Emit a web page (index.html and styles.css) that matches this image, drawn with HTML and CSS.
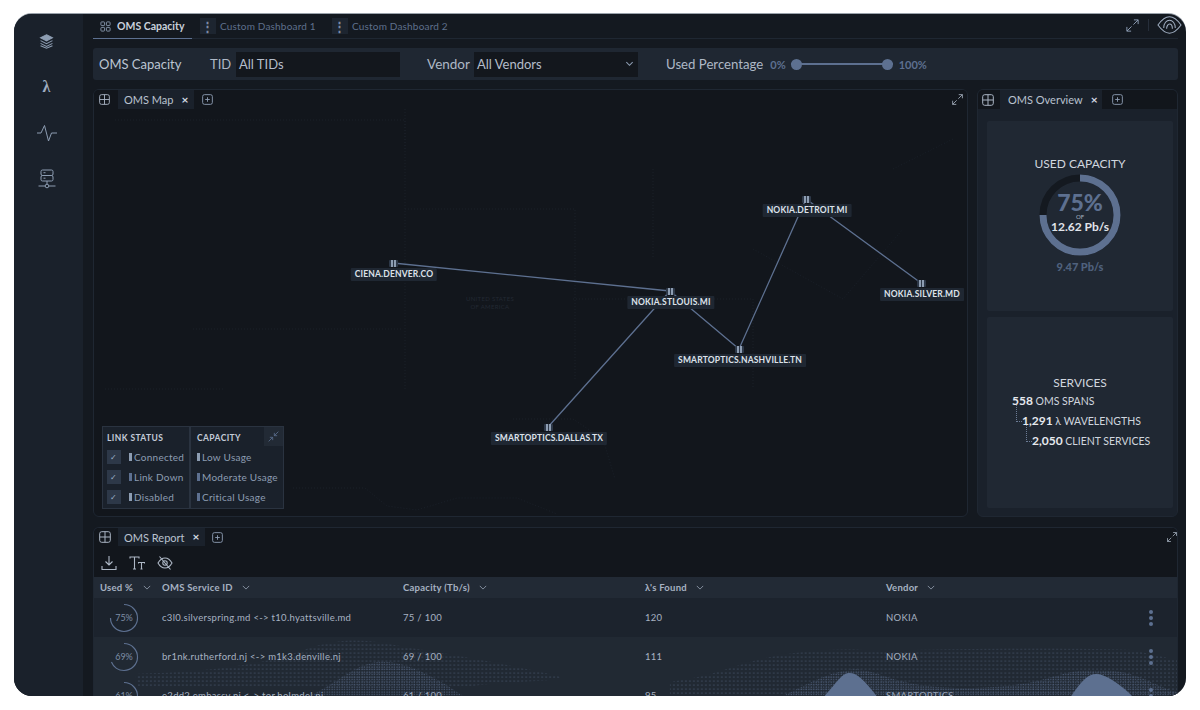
FILE: index.html
```html
<!DOCTYPE html>
<html lang="en">
<head>
<meta charset="utf-8">
<title>OMS Capacity</title>
<link rel="stylesheet" href="styles.css">
</head>
<body>
<div class="window">
  <aside class="sidebar">
    <div class="nav-item"><svg class="nav-icon" viewBox="0 0 20 20"><path class="fill-i" d="M10 2l7 3.600-7 3.600-7-3.600z"/><path d="M3 9l7 3.600L17 9M3 12.200l7 3.600 7-3.600M3 15l7 3 7-3"/></svg></div>
    <div class="nav-item lambda">λ</div>
    <div class="nav-item"><svg class="nav-icon wide" viewBox="0 0 20 20"><path d="M0 10h4L7.500 2.500 11.500 18l3-8H20"/></svg></div>
    <div class="nav-item"><svg class="nav-icon wide" viewBox="0 0 20 20"><rect x="4" y="1" width="12" height="5.500" rx="1.500"/><rect x="4" y="6.500" width="12" height="5.500" rx="1.500"/><path d="M10 12v3M1.500 17h6.500M12 17h6.500M6.500 3.700h2M6.500 9.200h2"/><circle cx="10" cy="17" r="1.800"/></svg></div>
  </aside>
  <main class="content">
    <nav class="top-tabs">
      <div class="top-tab active">
        <svg class="tab-grid" viewBox="0 0 12 12"><rect x="1" y="1" width="4" height="4" rx=".8"/><rect x="7" y="1" width="4" height="4" rx=".8"/><rect x="1" y="7" width="4" height="4" rx=".8"/><rect x="7" y="7" width="4" height="4" rx=".8"/></svg>
        <span>OMS Capacity</span>
      </div>
      <div class="top-tab"><span class="kebab">⋮</span><span>Custom Dashboard 1</span></div>
      <div class="top-tab"><span class="kebab">⋮</span><span>Custom Dashboard 2</span></div>
      <div class="top-actions">
        <svg class="expand" viewBox="0 0 16 16"><path d="M2 14l5-5M9 7l5-5M9.500 2H14v4.500M2 9.500V14h4.500"/></svg>
        <span class="action-sep"></span>
        <svg class="logo" viewBox="0 0 26 20"><path d="M1 10C5 4.500 9 1.500 13 1.500S21 4.500 25 10c-4 5.500-8 8.500-12 8.500S5 15.500 1 10z"/><path d="M7 13c0-5 3-8 6-8s6 3 6 8M10 14c0-3 1.500-5 3-5s3 2 3 5"/></svg>
      </div>
    </nav>

    <section class="filters">
      <span class="filter-title">OMS Capacity</span>
      <span class="filter-label tid-label">TID</span>
      <div class="field tid-field">All TIDs</div>
      <span class="filter-label vendor-label">Vendor</span>
      <div class="field vendor-field"><span>All Vendors</span><svg class="chev" viewBox="0 0 10 6"><path d="M1.500 1L5 4.500 8.500 1"/></svg></div>
      <span class="filter-label used-label">Used Percentage</span>
      <span class="pct">0%</span>
      <div class="slider"><span class="knob"></span><span class="knob"></span></div>
      <span class="pct">100%</span>
    </section>

    <div class="panels">
      <section class="panel map-panel">
        <header class="panel-tabs">
          <svg class="grid-ic" viewBox="0 0 12 12"><rect x=".7" y=".7" width="10.600" height="10.600" rx="2"/><path d="M6 .7v10.600M.7 6h10.600"/></svg>
          <div class="panel-tab"><span>OMS Map</span><span class="close">×</span></div>
          <svg class="add-ic" viewBox="0 0 12 12"><rect x=".7" y=".7" width="10.600" height="10.600" rx="2"/><path d="M6 3.500v5M3.500 6h5"/></svg>
          <svg class="expand panel-expand" viewBox="0 0 16 16"><path d="M2 14l5-5M9 7l5-5M9.500 2H14v4.500M2 9.500V14h4.500"/></svg>
        </header>
        <div class="map">
          <svg class="map-art" viewBox="0 0 875 407">
            <g class="borders">
              <path d="M22 11h290v270M312 100h170v170M312 40V0M480 190h180v90M100 220h210M560 60v90M660 140l90 50 60-70"/>
              <path d="M200 379h72l22 18 30 4 40-12h60l40 16M420 310h60l30 20 12 40M800 60l60-30M12 280h120"/>
            </g>
            <g class="links">
              <path d="M300 154L577 182M577 182L646 240M646 240L713 90M713 90L828 174M577 182L455 318"/>
            </g>
          </svg>
          <div class="map-text">UNITED STATES<br>OF AMERICA</div>

          <div class="node" style="left:300px;top:154px"><i></i><b>CIENA.DENVER.CO</b></div>
          <div class="node" style="left:577px;top:182px"><i></i><b>NOKIA.STLOUIS.MI</b></div>
          <div class="node" style="left:713px;top:90px"><i></i><b>NOKIA.DETROIT.MI</b></div>
          <div class="node" style="left:828px;top:174px"><i></i><b>NOKIA.SILVER.MD</b></div>
          <div class="node" style="left:646px;top:240px"><i></i><b>SMARTOPTICS.NASHVILLE.TN</b></div>
          <div class="node" style="left:455px;top:318px"><i></i><b>SMARTOPTICS.DALLAS.TX</b></div>

          <div class="legend">
            <div class="legend-col status">
              <h4>LINK STATUS</h4>
              <div class="legend-row"><span class="check">✓</span><span class="swatch bright"></span>Connected</div>
              <div class="legend-row"><span class="check">✓</span><span class="swatch mid"></span>Link Down</div>
              <div class="legend-row"><span class="check">✓</span><span class="swatch bright"></span>Disabled</div>
            </div>
            <div class="legend-col capacity">
              <h4>CAPACITY</h4>
              <div class="legend-row"><span class="swatch bright"></span>Low Usage</div>
              <div class="legend-row"><span class="swatch mid"></span>Moderate Usage</div>
              <div class="legend-row"><span class="swatch mid"></span>Critical Usage</div>
            </div>
            <span class="legend-collapse"><svg viewBox="0 0 16 16"><path d="M2 14l5-5M14 2L9 7M3.500 9H7v3.500M12.500 7H9V3.500"/></svg></span>
          </div>
        </div>
      </section>

      <section class="panel overview-panel">
        <header class="panel-tabs overview-tabs">
          <svg class="grid-ic" viewBox="0 0 12 12"><rect x=".7" y=".7" width="10.600" height="10.600" rx="2"/><path d="M6 .7v10.600M.7 6h10.600"/></svg>
          <div class="panel-tab"><span>OMS Overview</span><span class="close">×</span></div>
          <svg class="add-ic" viewBox="0 0 12 12"><rect x=".7" y=".7" width="10.600" height="10.600" rx="2"/><path d="M6 3.500v5M3.500 6h5"/></svg>
        </header>
        <div class="card capacity-card">
          <h3>USED CAPACITY</h3>
          <div class="donut">
            <svg viewBox="0 0 84 84">
              <circle class="ring-bg" cx="42" cy="42" r="37"/>
              <circle class="ring-val" cx="42" cy="42" r="37" pathLength="100" stroke-dasharray="75 25" transform="rotate(-90 42 42)"/>
            </svg>
            <div class="donut-text">
              <strong>75%</strong>
              <small>OF</small>
              <em>12.62 Pb/s</em>
            </div>
          </div>
          <div class="used-value">9.47 Pb/s</div>
        </div>
        <div class="card services-card">
          <h3>SERVICES</h3>
          <ul class="services">
            <li class="lvl0"><b>558</b> OMS SPANS</li>
            <li class="lvl1"><b>1,291</b> λ WAVELENGTHS</li>
            <li class="lvl2"><b>2,050</b> CLIENT SERVICES</li>
          </ul>
        </div>
      </section>
    </div>

    <section class="panel report-panel">
      <header class="panel-tabs">
        <svg class="grid-ic" viewBox="0 0 12 12"><rect x=".7" y=".7" width="10.600" height="10.600" rx="2"/><path d="M6 .7v10.600M.7 6h10.600"/></svg>
        <div class="panel-tab"><span>OMS Report</span><span class="close">×</span></div>
        <svg class="add-ic" viewBox="0 0 12 12"><rect x=".7" y=".7" width="10.600" height="10.600" rx="2"/><path d="M6 3.500v5M3.500 6h5"/></svg>
        <svg class="expand panel-expand" viewBox="0 0 16 16"><path d="M2 14l5-5M9 7l5-5M9.500 2H14v4.500M2 9.500V14h4.500"/></svg>
      </header>
      <div class="toolbar">
        <svg viewBox="0 0 16 16"><path d="M8 1v9M4.500 6.500L8 10l3.500-3.500M1 11v3.500h14V11"/></svg>
        <svg viewBox="0 0 16 16"><path d="M1 3.500V2h9v1.500M5.500 2v12M4 14h3M9.500 8.500V7.500h6v1M12.500 7.500V14M11.500 14h2"/></svg>
        <svg viewBox="0 0 16 16"><path d="M1 8c2-3.500 4.500-5 7-5s5 1.500 7 5c-2 3.500-4.500 5-7 5s-5-1.500-7-5zM2.500 1.500l11 13"/><circle cx="8" cy="8" r="2.200"/></svg>
      </div>
      <div class="table">
        <div class="row head">
          <span>Used % <svg class="sort" viewBox="0 0 10 6"><path d="M1 1l4 4 4-4"/></svg></span>
          <span>OMS Service ID <svg class="sort" viewBox="0 0 10 6"><path d="M1 1l4 4 4-4"/></svg></span>
          <span>Capacity (Tb/s) <svg class="sort" viewBox="0 0 10 6"><path d="M1 1l4 4 4-4"/></svg></span>
          <span>λ's Found <svg class="sort" viewBox="0 0 10 6"><path d="M1 1l4 4 4-4"/></svg></span>
          <span>Vendor <svg class="sort" viewBox="0 0 10 6"><path d="M1 1l4 4 4-4"/></svg></span>
          <span></span>
        </div>
        <div class="row odd">
          <span class="gauge"><svg viewBox="0 0 30 30"><circle cx="15" cy="15" r="13.500" pathLength="100" stroke-dasharray="75 25" transform="rotate(-90 15 15)"/></svg><i>75%</i></span>
          <span>c3l0.silverspring.md &lt;-&gt; t10.hyattsville.md</span><span>75 / 100</span><span>120</span><span>NOKIA</span><span class="dots"><i></i><i></i><i></i></span>
        </div>
        <div class="row even">
          <span class="gauge"><svg viewBox="0 0 30 30"><circle cx="15" cy="15" r="13.500" pathLength="100" stroke-dasharray="69 31" transform="rotate(-90 15 15)"/></svg><i>69%</i></span>
          <span>br1nk.rutherford.nj &lt;-&gt; m1k3.denville.nj</span><span>69 / 100</span><span>111</span><span>NOKIA</span><span class="dots"><i></i><i></i><i></i></span>
        </div>
        <div class="row odd last">
          <span class="gauge"><svg viewBox="0 0 30 30"><circle cx="15" cy="15" r="13.500" pathLength="100" stroke-dasharray="61 39" transform="rotate(-90 15 15)"/></svg><i>61%</i></span>
          <span>e2dd2.embassy.nj &lt;-&gt; tor.holmdel.nj</span><span>61 / 100</span><span>95</span><span>SMARTOPTICS</span><span class="dots"><i></i><i></i><i></i></span>
        </div>
        <svg class="waves" viewBox="0 0 1085 60" preserveAspectRatio="none">
          <defs>
            <pattern id="sparse" width="4" height="4" patternUnits="userSpaceOnUse"><circle cx="1" cy="1" r=".5" fill="#5d7090"/></pattern>
            <pattern id="dense" width="2.500" height="2.500" patternUnits="userSpaceOnUse"><circle cx="1" cy="1" r=".6" fill="#5d7090"/></pattern>
          </defs>
          <path fill="url(#sparse)" d="M42 38C100 36 160 32 210 14S290 8 330 14 420 30 457 38 420 44 380 50H42z"/>
          <path fill="url(#dense)" d="M215 60C240 50 260 28 285 26S340 40 370 60z"/>
          <path fill="url(#sparse)" d="M577 46C620 40 640 30 664 24S730 12 770 14 900 10 1040 14L1085 24V60H577z"/>
          <path fill="url(#dense)" d="M690 60C712 50 730 38 757 34S800 54 880 52 960 34 1004 34 1060 50 1085 56V60z"/>
          <path class="blob" d="M732 60C746 44 750 37 757 37S772 44 784 60z"/>
          <path class="blob" d="M979 60C990 44 996 38 1004 38S1026 46 1040 60z"/>
        </svg>
      </div>
    </section>
  </main>
</div>
</body>
</html>
```
FILE: styles.css
```css
* { box-sizing: border-box; }
html, body { margin: 0; height: 100%; background: #fff; }
body { padding: 14px; font-family: "Lato", "Noto Sans", sans-serif; color: #c4ccd8; overflow: hidden; }
svg { display: block; fill: none; stroke: currentColor; }

.window {
  width: 1172px; height: 682px; display: flex; overflow: hidden;
  border-radius: 18px; background: #141920; box-shadow: 0 -1px 0 #9aa2ab;
}

/* sidebar */
.sidebar {
  width: 69px; flex: none; display: flex; flex-direction: column; align-items: center;
  padding: 4px 4px 0 0; background: #1a212b; color: #8d9db2;
  background-image: radial-gradient(#12161c 0.5px, transparent 0.6px); background-size: 2px 2px;
}
.nav-item { height: 46px; display: flex; align-items: center; justify-content: center; width: 100%; }
.nav-icon { width: 17px; height: 17px; stroke-width: 1.2; }
.nav-icon.wide { width: 20px; height: 20px; stroke-width: 1; }
.fill-i { fill: currentColor; }
.lambda { font-size: 16px; font-weight: 700; font-family: "Liberation Serif", serif; color: #9fadc0; }

/* main column */
.content { flex: 1; min-width: 0; display: flex; flex-direction: column; padding: 0 8px 0 10px; }
.top-tabs {
  height: 25px; flex: none; display: flex; align-items: stretch;
  border-bottom: 1px solid #1f2732; font-size: 10px; letter-spacing: .18px; color: #5f708c; white-space: nowrap;
}
.top-tab { display: flex; align-items: center; gap: 4px; margin-right: 4px; }
.top-tab.active {
  width: 99px; margin-right: 8px; padding-left: 7px; gap: 6px; font-size: 10.500px; letter-spacing: 0;
  font-weight: 700; color: #c9d1dc; border-bottom: 1px solid #5d7090; margin-bottom: -1px;
}
.top-tab + .top-tab { width: 128px; }
.tab-grid { width: 11px; height: 11px; stroke-width: 1; color: #8a9ab0; }
.kebab {
  width: 16px; height: 16px; display: flex; align-items: center; justify-content: center;
  background: #1d2530; font-size: 13px; font-weight: 700; color: #7c8ca5;
}
.top-actions { margin-left: auto; display: flex; align-items: center; gap: 8px; margin-right: -4px; padding-bottom: 2px; }
.expand { width: 15px; height: 15px; stroke-width: 1; color: #8fa0b8; }
.action-sep { width: 1px; height: 12px; background: #262e3a; }
.logo { width: 25px; height: 20px; stroke-width: 1.1; color: #9fadc0; }

/* filter bar */
.filters {
  height: 32px; margin-top: 9px; flex: none; display: flex; align-items: center;
  background: #1f2732; border-radius: 3px; padding-left: 6px; font-size: 13.500px; color: #bcc5d2;
}
.filter-title { width: 111px; font-size: 13px; }
.filter-label { color: #aeb8c6; }
.tid-label { width: 26px; font-size: 13px; }
.field {
  height: 25px; background: #13171d; display: flex; align-items: center; padding: 0 3px;
  color: #b4bdca; font-size: 13px;
}
.tid-field { width: 164px; }
.vendor-label { width: 47px; margin-left: 27px; }
.vendor-field { width: 164px; justify-content: space-between; padding-right: 4px; }
.chev { width: 9px; height: 6px; stroke-width: 1.2; color: #8d9db2; }
.used-label { margin-left: 28px; margin-right: 7px; font-size: 13.200px; }
.pct { font-size: 11px; font-weight: 700; color: #5d7090; }
.slider {
  width: 102px; height: 2px; margin: 0 6px 0 5px; background: #5d7090; display: flex;
  justify-content: space-between; align-items: center;
}
.knob { width: 11px; height: 11px; border-radius: 50%; background: #5d7090; }

/* panels */
.panels { height: 428px; margin-top: 9px; flex: none; display: flex; gap: 9px; }
.panel { border: 1px solid #1f2732; border-radius: 6px; background: #12161c; overflow: hidden; position: relative; }
.map-panel { width: 875px; flex: none; display: flex; flex-direction: column; }
.overview-panel { flex: 1; background: #1a212b; display: flex; flex-direction: column; }

.panel-tabs { height: 19px; flex: none; display: flex; align-items: center; font-size: 11px; color: #b9c2cf; background: #12161c; white-space: nowrap; }
.grid-ic { width: 11px; height: 11px; margin: 0 8px 0 5px; stroke-width: 1; color: #aab5c4; flex: none; }
.add-ic { width: 11px; height: 11px; margin-left: 8px; stroke-width: 1; color: #8d9db2; flex: none; }
.panel-tab { height: 100%; display: flex; align-items: center; gap: 8px; padding: 0 6px; background: #1a212b; }
.close { font-size: 12px; font-weight: 700; color: #d4dae3; line-height: 1; }
.panel-expand { width: 13px; height: 13px; margin-left: auto; margin-right: 3px; color: #aab5c4; }

.overview-tabs .grid-ic { margin: 0 6px 0 4px; width: 12px; height: 12px; }
.overview-tabs .panel-tab { width: 102px; padding: 0 5px 0 8px; justify-content: space-between; }
.overview-tabs .add-ic { margin-left: 10px; }

.map {
  flex: 1; position: relative;
  background-image: radial-gradient(#181e27 0.6px, transparent 0.7px); background-size: 4px 4px;
}
.map-art { position: absolute; left: -1px; top: 0; width: 875px; height: 407px; }
.borders path { stroke: #1a2029; stroke-width: 1; stroke-dasharray: 1 2; }
.links path { stroke: #5d7090; stroke-width: 1.300; }
.map-text { position: absolute; left: 372px; top: 186px; font-size: 6px; line-height: 8px; color: #222933; text-align: center; letter-spacing: .3px; }

.node { position: absolute; width: 0; height: 0; }
.node i {
  position: absolute; left: -5px; top: -3px; width: 9px; height: 7px; border-radius: 1px;
  background: linear-gradient(90deg, #2d3848 20%, #8d9db2 20% 40%, #2d3848 40% 60%, #8d9db2 60% 80%, #2d3848 80%);
}
.node b {
  position: absolute; left: 0; top: 5px; transform: translateX(-50%); white-space: nowrap;
  background: #1f2732; color: #dde2ea; font-size: 8.500px; font-weight: 700; letter-spacing: .17px;
  padding: 1px 4px; line-height: 11px; border-radius: 1px;
}

.legend {
  position: absolute; left: 8px; top: 317px; width: 182px; height: 83px; display: flex;
  background: #1a212b; border: 1px solid #2a3340;
}
.legend-col { padding: 5px 0 0 4px; }
.legend-col h4 { margin: 0 0 3px; font-size: 8.500px; line-height: 12px; letter-spacing: .4px; color: #c4ccd8; font-weight: 700; }
.status { width: 88px; border-right: 2px solid #2a3340; }
.capacity { flex: 1; padding-left: 6px; }
.legend-row { height: 20px; display: flex; align-items: center; font-size: 10px; color: #8d9db2; letter-spacing: .25px; white-space: nowrap; }
.check {
  width: 14px; height: 14px; margin-right: 8px; background: #2d3848; display: flex; align-items: center;
  justify-content: center; font-size: 8px; color: #9fb0c8; flex: none;
}
.swatch { width: 3px; height: 8px; margin-right: 2px; flex: none; }
.swatch.bright { background: #8d9db2; }
.swatch.mid { background: #5d7090; }
.legend-collapse {
  position: absolute; right: 0; top: 0; width: 19px; height: 19px; padding: 3px;
  background: #222a35; color: #5d7090;
}

/* overview cards */
.card {
  margin: 0 4px 0 9px; background: #202833; border-radius: 2px; text-align: center; color: #d0d6df;
  display: flex; flex-direction: column; align-items: center;
}
.card h3 { margin: 0; font-size: 12px; font-weight: 400; line-height: 14px; color: #d0d6df; }
.capacity-card { height: 190px; margin-top: 12px; padding-top: 36px; }
.services-card { height: 191px; margin-top: 6px; padding-top: 59px; }
.donut { position: relative; width: 84px; height: 84px; margin-top: 2px; }
.donut svg { width: 84px; height: 84px; stroke-width: 7; }
.ring-bg { stroke: #141920; }
.ring-val { stroke: #5d7090; }
.donut-text { position: absolute; inset: 0; display: flex; flex-direction: column; align-items: center; justify-content: center; padding-bottom: 6px; }
.donut-text strong { font-size: 23px; line-height: 22px; color: #5d7090; font-weight: 900; }
.donut-text small { font-size: 6px; line-height: 7px; color: #a9b4c3; }
.donut-text em { font-style: normal; font-size: 12px; line-height: 13px; font-weight: 700; color: #e0e4ea; }
.used-value { margin-top: 3px; font-size: 11px; font-weight: 900; color: #4f617d; }

.services { list-style: none; margin: 1px 0 0; padding: 0; width: 100%; text-align: left; font-size: 10.500px; color: #d0d6df; }
.services li { height: 20px; line-height: 20px; white-space: nowrap; position: relative; }
.services b { font-size: 12px; color: #e6e9ee; }
.lvl0 { padding-left: 25px; }
.lvl1 { padding-left: 35px; }
.lvl2 { padding-left: 45px; }
.lvl1::before, .lvl2::before {
  content: ""; position: absolute; top: -6px; width: 5px; height: 16px;
  border-left: 1px dotted #6b7c96; border-bottom: 1px dotted #6b7c96;
}
.lvl1::before { left: 29px; }
.lvl2::before { left: 39px; }

/* report */
.report-panel { height: 175px; margin-top: 10px; flex: none; border-bottom: 0; }
.report-panel .panel-tabs { height: 18px; }
.report-panel .grid-ic { margin: 0 7px 0 5px; width: 12px; height: 12px; }
.report-panel .add-ic { margin-left: 7px; }
.report-panel .panel-expand { width: 12px; height: 12px; margin-right: -1px; }
.toolbar { height: 31px; display: flex; align-items: center; gap: 12px; padding: 2px 0 0 7px; }
.toolbar svg { width: 16px; height: 16px; stroke-width: 1.100; color: #aeb8c6; }
.table { position: relative; }
.row {
  display: grid; grid-template-columns: 62px 241px 242px 241px 263px 1fr; align-items: center;
  padding-left: 6px; font-size: 9.500px; letter-spacing: .3px; color: #a7b2c2;
}
.row.head { height: 21px; background: #222a35; color: #a7b2c2; }
.row.head span { display: flex; align-items: center; gap: 9px; font-weight: 700; letter-spacing: .25px; }
.row.head span:first-child { gap: 10px; }
.sort { width: 8px; height: 5px; stroke-width: 1; color: #9aa6b7; }
.row.odd, .row.even { height: 39px; }
.row.odd { background: #1c232d; }
.row.even { background: #212933; }
.row.last { background: #212933; }
.gauge { position: relative; width: 30px; height: 30px; margin-left: 9px; display: flex; align-items: center; justify-content: center; }
.gauge svg { position: absolute; inset: 0; stroke-width: 1.200; color: #5d7090; }
.gauge i { font-style: normal; font-size: 9px; color: #7e8ea6; letter-spacing: 0; }
.dots { display: flex; flex-direction: column; gap: 2px; width: 4px; }
.dots i { width: 4px; height: 4px; border-radius: 50%; background: #5d7090; }
.waves { position: absolute; left: 0; bottom: 19px; width: 100%; height: 60px; stroke: none; pointer-events: none; }
.blob { fill: #5d7090; stroke: none; }
```
